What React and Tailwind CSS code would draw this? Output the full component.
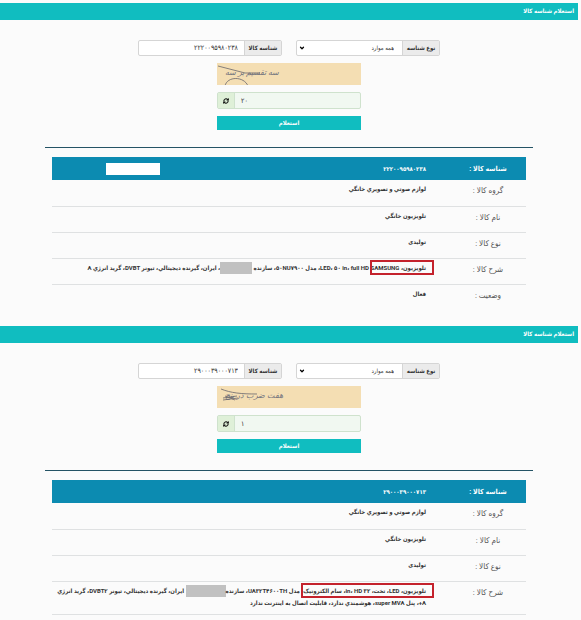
import { ChevronDown, RefreshCw } from "lucide-react";
import { useState } from "react";

function Marked({ children }) {
  return (
    <span className="relative inline-block">
      {children}
      <span className="absolute -top-0.5 -bottom-px left-0 -right-2 border-2 border-[#c4222c]" />
    </span>
  );
}

const items = [
  {
    id: "first",
    code: "۲۲۲۰۰۹۵۹۸۰۲۳۸",
    captcha: "سه تقسیم بر سه",
    answer: "۲۰",
    masked: true,
    description: (
      <>
        <Marked>تلويزيون، SAMSUNG</Marked> <bdi dir="ltr">LED، ۵۰ in، full HD</bdi>، مدل
        ۵۰NU۷۹۰۰، سازنده{" "}
        <span className="inline-block w-8 h-3 bg-[#c1c1c1] align-middle" />، ايران، گيرنده
        ديجيتالي، تيونر DVBT، گريد انرژي A
      </>
    ),
    status: "فعال",
  },
  {
    id: "second",
    code: "۲۹۰۰۰۳۹۰۰۰۷۱۳",
    captcha: "هفت ضرب در پنج",
    answer: "۱",
    masked: false,
    description: (
      <>
        <Marked>تلويزيون، LED، تخت، ۳۲ in، HD، سام الکترونيک،</Marked> مدل UA۳۲T۴۶۰۰TH، سازنده
        <span className="inline-block w-10 h-3 bg-[#c1c1c1] align-middle" /> ايران، گيرنده
        ديجيتالي، تيونر DVBT۲، گريد انرژي
        <br />
        A+، پنل super MVA، هوشمندي ندارد، قابليت اتصال به اينترنت ندارد
      </>
    ),
  },
];

function Captcha({ item }) {
  return (
    <div className="relative h-[22px] overflow-hidden bg-[#f4deb3] text-[#77777f]">
      <span className="absolute top-0 left-2 text-[8px] leading-5 italic whitespace-nowrap">
        {item.captcha}
      </span>
      <svg className="absolute inset-0 w-full h-full" fill="none" stroke="#68666c" strokeWidth="0.8">
        {item.masked ? (
          <>
            <path d="M1 3 L28 10 L43 10" />
            <path d="M8 23 C10 13 27 13 31 23" />
          </>
        ) : (
          <>
            <path d="M4 3 C14 7 24 8 40 8" />
            <path d="M6 12 L20 10 M6 14 L21 12 M8 10 L18 14" />
          </>
        )}
      </svg>
    </div>
  );
}

function Row({ label, last, children }) {
  return (
    <tr className={last ? "" : "border-b border-[#dfe1e2]"}>
      <th className="w-[76px] h-[26px] pt-[3px] align-top text-[8px] leading-4 font-normal text-[#555]">
        {label} :
      </th>
      <td className="pt-[3px] pb-[5px] pr-6 align-top font-bold text-[#333]">{children}</td>
    </tr>
  );
}

function Inquiry({ item }) {
  const [code, setCode] = useState(item.code);
  const [answer, setAnswer] = useState(item.answer);

  return (
    <section className="mr-[3px]">
      <h2 className="h-[17px] px-1 bg-[#10bdc0] text-white leading-4 font-bold">
        استعلام شناسه کالا
      </h2>

      <div className="pt-5 px-[45px]">
        {/* Search form */}
        <form onSubmit={(e) => e.preventDefault()}>
          <div className="flex justify-center gap-[14px] text-[#333]">
            <div className="flex w-36 h-4 border border-[#d5d5d5] rounded-xs bg-white">
              <label
                htmlFor={`${item.id}-type`}
                className="w-[37px] shrink-0 bg-[#ebebeb] border-l border-[#d5d5d5] text-center leading-[14px] font-bold"
              >
                نوع شناسه
              </label>
              <div className="relative flex-1">
                <select
                  id={`${item.id}-type`}
                  className="block w-full h-full pr-2 appearance-none bg-transparent"
                >
                  <option>همه موارد</option>
                </select>
                <ChevronDown
                  className="absolute top-1 left-0.5 w-1.5 h-1.5 text-black pointer-events-none"
                  strokeWidth={5}
                />
              </div>
            </div>
            <div className="flex w-36 h-4 border border-[#d5d5d5] rounded-xs bg-white">
              <label
                htmlFor={`${item.id}-code`}
                className="w-[37px] shrink-0 bg-[#ebebeb] border-l border-[#d5d5d5] text-center leading-[14px] font-bold"
              >
                شناسه کالا
              </label>
              <input
                id={`${item.id}-code`}
                value={code}
                onChange={(e) => setCode(e.target.value)}
                className="flex-1 min-w-0 pr-1.5 text-[7px]"
              />
            </div>
          </div>

          <div className="w-36 mx-auto mt-[7px] flex flex-col gap-[7px]">
            <Captcha item={item} />
            <div className="flex h-[17px] border border-[#cfe2cd] rounded-xs bg-[#f1f8f1]">
              <input
                aria-label="پاسخ"
                dir="ltr"
                value={answer}
                onChange={(e) => setAnswer(e.target.value)}
                className="flex-1 min-w-0 pl-1.5 text-[7px] text-[#333]"
              />
              <button
                type="button"
                aria-label="تازه سازی"
                className="flex items-center justify-center w-[17px] bg-[#dff0d8] border-r border-[#cfe2cd]"
              >
                <RefreshCw className="w-1.5 h-1.5 text-black" strokeWidth={4} />
              </button>
            </div>
            <button type="submit" className="h-[14px] bg-[#10bdc0] text-white font-bold">
              استعلام
            </button>
          </div>
        </form>

        {/* Result */}
        <div className="mt-[17px] pt-[9px] px-[7px] border-t border-[#245365]">
          <table className="w-full">
            <thead>
              <tr className="h-[23px] bg-[#0c8bb1] text-white">
                <th className="w-[76px] text-[7px] font-bold">شناسه کالا :</th>
                <td className="pr-6 font-bold">
                  <div className="flex items-center justify-between">
                    {item.code}
                    {item.masked && <span className="w-[54px] h-3 ml-[54px] bg-white" />}
                  </div>
                </td>
              </tr>
            </thead>
            <tbody>
              <Row label="گروه کالا">لوازم صوتي و تصويري خانگي</Row>
              <Row label="نام کالا">تلويزيون خانگي</Row>
              <Row label="نوع کالا">توليدی</Row>
              <Row label="شرح کالا">{item.description}</Row>
              {item.status && (
                <Row label="وضعیت" last>
                  {item.status}
                </Row>
              )}
            </tbody>
          </table>
        </div>
      </div>
    </section>
  );
}

export default function App() {
  return (
    <main
      dir="rtl"
      lang="fa"
      className="flex flex-col gap-4 min-h-screen pt-[3px] bg-[#fbfbfb] font-[Roboto,'DejaVu_Sans_Condensed','DejaVu_Sans',sans-serif] text-[6px] leading-3"
    >
      {items.map((item) => (
        <Inquiry key={item.id} item={item} />
      ))}
    </main>
  );
}
